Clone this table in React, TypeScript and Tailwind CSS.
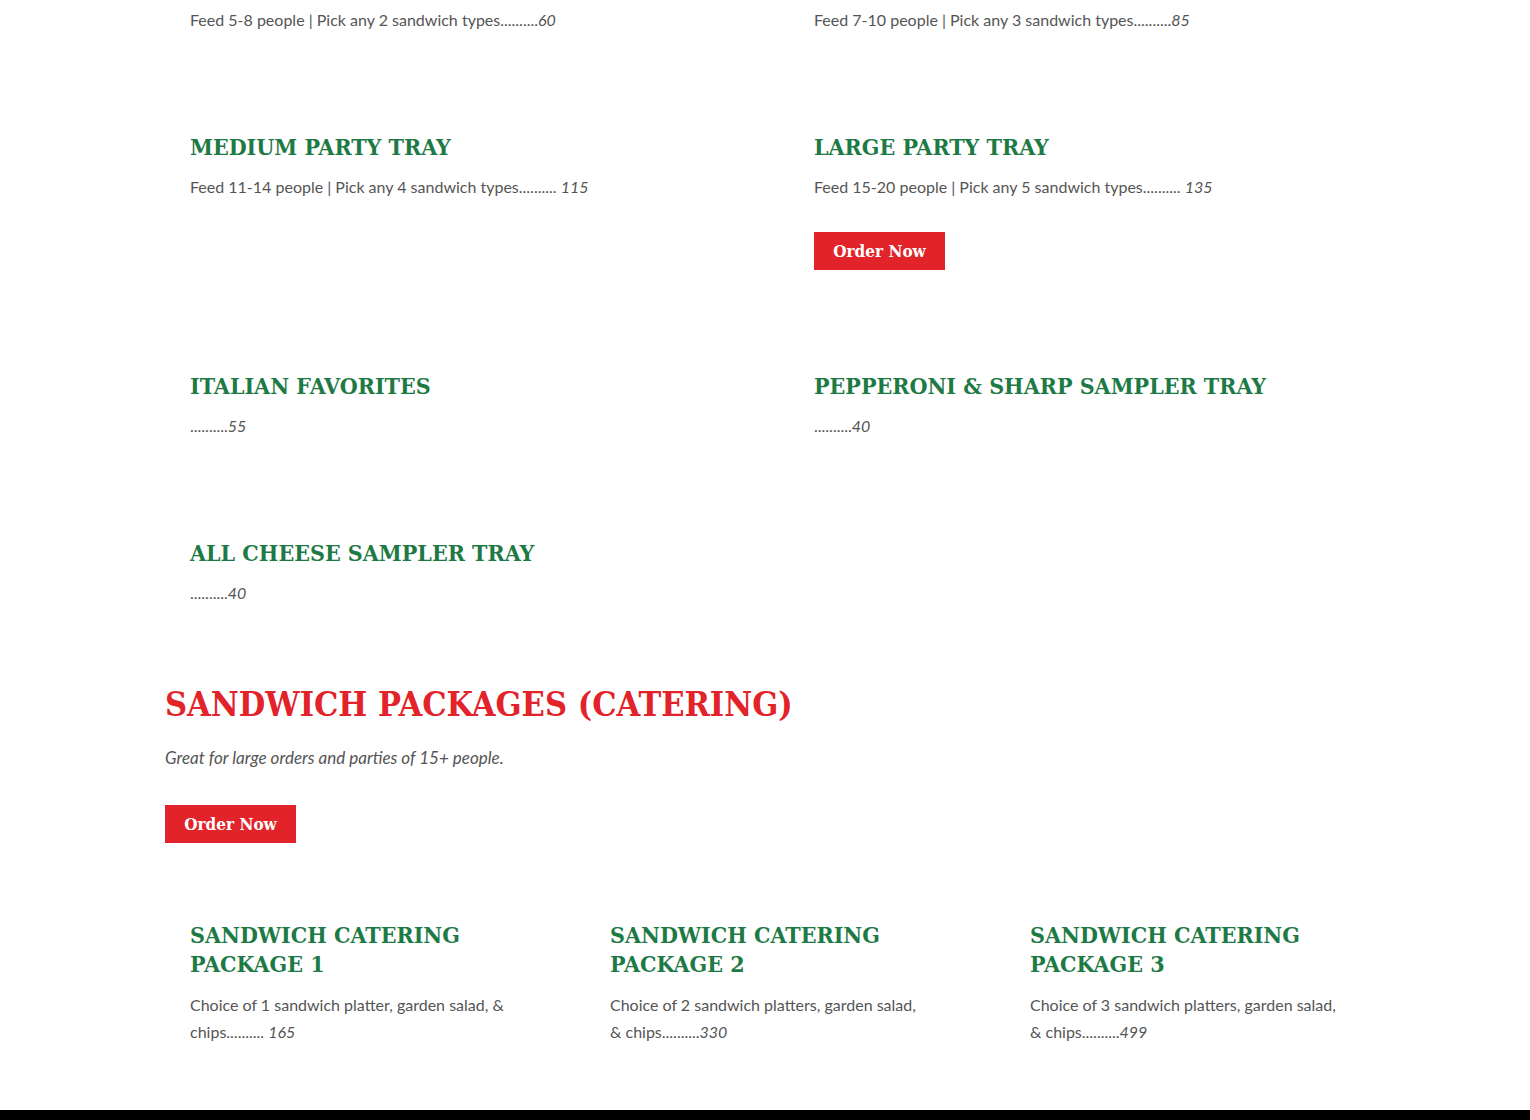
import React from "react";

const H = "font-['DejaVu_Serif_Condensed','DejaVu_Serif',serif] font-bold";
const BODY = "font-['Lato','Noto_Sans',sans-serif]";

function Price({ pre, sep, price }: { pre: React.ReactNode; sep?: boolean; price: string }) {
  return (
    <p className={`${BODY} text-[16px] leading-[27px] text-[#555555]`}>
      {pre}..........{sep ? " " : ""}
      <em className="italic">{price}</em>
    </p>
  );
}

function Item({ title, pre, sep, price, button }: { title: string; pre: string; sep?: boolean; price: string; button?: boolean }) {
  return (
    <div>
      <h3 className={`${H} text-[23px] leading-[29px] text-[#1e7a45] whitespace-nowrap`}>{title}</h3>
      <div className="mt-[12px]">
        <Price pre={pre} sep={sep} price={price} />
      </div>
      {button && <OrderButton className="mt-[32px] mb-[2px]" />}
    </div>
  );
}

function OrderButton({ className = "" }: { className?: string }) {
  return (
    <button
      className={`${H} ${className} flex h-[38px] w-[131px] items-center justify-center bg-[#e2232a] text-[17px] leading-none text-white`}
    >
      Order Now
    </button>
  );
}

function Pkg({ n, line1, line2, sep, price }: { n: string; line1: string; line2: string; sep?: boolean; price: string }) {
  return (
    <div>
      <h3 className={`${H} text-[23px] leading-[29px] text-[#1e7a45] whitespace-nowrap`}>
        SANDWICH CATERING
        <br />
        PACKAGE {n}
      </h3>
      <div className="mt-[13px]">
        <Price
          pre={
            <>
              {line1}
              <br />
              {line2}
            </>
          }
          sep={sep}
          price={price}
        />
      </div>
    </div>
  );
}

export default function App() {
  return (
    <div className="min-h-[1120px] bg-white flex flex-col">
      <div className="pl-[190px] pt-[6px]">
        <div className="grid grid-cols-[624px_1fr] gap-y-[99px]">
          <Price pre="Feed 5-8 people | Pick any 2 sandwich types" price="60" />
          <Price pre="Feed 7-10 people | Pick any 3 sandwich types" price="85" />
          <Item title="MEDIUM PARTY TRAY" pre="Feed 11-14 people | Pick any 4 sandwich types" sep price="115" />
          <Item title="LARGE PARTY TRAY" pre="Feed 15-20 people | Pick any 5 sandwich types" sep price="135" button />
          <Item title="ITALIAN FAVORITES" pre="" price="55" />
          <Item title="PEPPERONI & SHARP SAMPLER TRAY" pre="" price="40" />
          <Item title="ALL CHEESE SAMPLER TRAY" pre="" price="40" />
        </div>
      </div>

      <section className="pl-[165px] mt-[78px]">
        <h2 className={`${H} text-[34px] leading-[40px] text-[#e2232a] whitespace-nowrap`}>
          SANDWICH PACKAGES (CATERING)
        </h2>
        <p className={`${BODY} mt-[20px] text-[17px] italic leading-[27px] text-[#555555]`}>
          Great for large orders and parties of 15+ people.
        </p>
        <OrderButton className="mt-[34px]" />
      </section>

      <div className="pl-[190px] mt-[77px]">
        <div className="grid grid-cols-[420px_420px_1fr]">
          <Pkg n="1" line1="Choice of 1 sandwich platter, garden salad, &" line2="chips" sep price="165" />
          <Pkg n="2" line1="Choice of 2 sandwich platters, garden salad," line2="& chips" price="330" />
          <Pkg n="3" line1="Choice of 3 sandwich platters, garden salad," line2="& chips" price="499" />
        </div>
      </div>

      <div className="mt-auto h-[10px] bg-black" />
    </div>
  );
}
